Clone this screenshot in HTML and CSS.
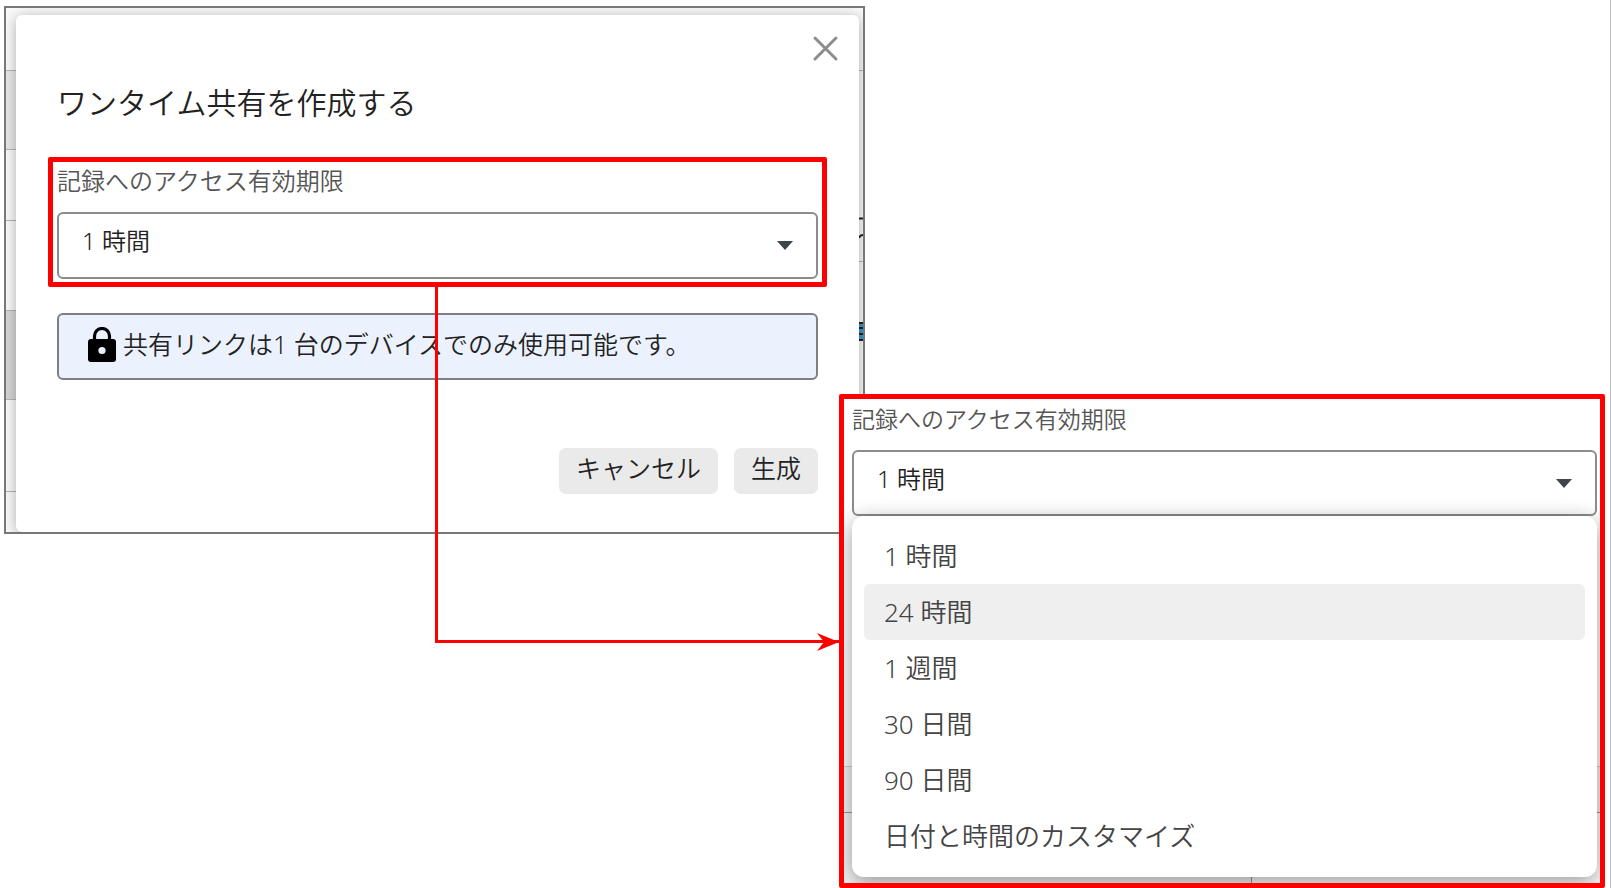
FILE: index.html
```html
<!DOCTYPE html>
<html lang="ja">
<head>
    <meta charset="UTF-8">
    <meta name="viewport" content="width=device-width, initial-scale=1.0">
    <title>ワンタイム共有を作成する</title>
    <link rel="stylesheet" href="styles.css">
</head>
<body>
    <main class="guide">
        <!-- Share dialog -->
        <section class="window">
            <div class="page-behind">
                <div class="side-rows">
                    <div class="row-top"></div>
                    <div class="row-shaded"></div>
                    <div class="row-plain"></div>
                    <div class="row-list"></div>
                    <div class="row-dark"></div>
                    <div class="row-plain-tall"></div>
                    <div class="row-last"></div>
                </div>
                <svg class="edge-marks" viewBox="0 0 4 524" width="4" height="524" aria-hidden="true">
                    <path d="M0 62.5h4M0 253.5h4" stroke="#b5b5b5"/>
                    <path d="M0 210.5h4M0 230q1-3 4-3" stroke="#222" stroke-width="2" fill="none"/>
                    <path d="M0 314h4v19H0z" fill="#2e9bd6"/>
                    <path d="M0 315h4M0 320h4M0 326h4M0 332h4" stroke="#222" stroke-width="2"/>
                </svg>
            </div>

            <div class="dialog">
                <button type="button" class="close" aria-label="閉じる">
                    <svg viewBox="0 0 32 32" width="32" height="32">
                        <path d="M5 5L26 26M26 5L5 26" fill="none" stroke="#8c8c8c" stroke-width="3" stroke-linecap="round"/>
                    </svg>
                </button>
                <h1>ワンタイム共有を作成する</h1>

                <div class="highlight">
                    <label for="expiry">記録へのアクセス有効期限</label>
                    <div class="select-box">
                        <select id="expiry">
                            <option>1 時間</option>
                            <option>24 時間</option>
                            <option>1 週間</option>
                            <option>30 日間</option>
                            <option>90 日間</option>
                            <option>日付と時間のカスタマイズ</option>
                        </select>
                        <svg class="caret" viewBox="0 0 16 9" width="16" height="9" aria-hidden="true">
                            <path d="M0 0h16L8 9z" fill="#3c4648"/>
                        </svg>
                    </div>
                </div>

                <div class="notice">
                    <svg class="lock" viewBox="0 0 28 35" width="28" height="35" aria-hidden="true">
                        <path d="M6.500 14V9a7.500 7.500 0 0 1 15 0v5" fill="none" stroke="#000" stroke-width="3.200"/>
                        <rect x="0" y="12" width="28" height="23" rx="3"/>
                        <circle cx="14" cy="23.500" r="3.600" fill="#ebf2fe"/>
                    </svg>
                    <span>共有リンクは1 台のデバイスでのみ使用可能です。</span>
                </div>

                <div class="actions">
                    <button type="button">キャンセル</button>
                    <button type="button">生成</button>
                </div>
            </div>
        </section>

        <!-- Arrow from the field to its open state -->
        <div class="connector">
            <svg viewBox="0 0 22 18" width="22" height="18" aria-hidden="true">
                <path d="M0 0L22 9L0 18L7 9z" fill="#f00"/>
            </svg>
        </div>

        <!-- Open drop-down -->
        <section class="dropdown">
            <div class="dropdown-behind">
                <div class="behind-card"></div>
                <div class="behind-row"></div>
                <div class="behind-columns"></div>
            </div>
            <div class="dropdown-content">
                <label for="expiry-open">記録へのアクセス有効期限</label>
                <div class="select-box">
                    <select id="expiry-open">
                        <option>1 時間</option>
                        <option>24 時間</option>
                    </select>
                    <svg class="caret" viewBox="0 0 16 9" width="16" height="9" aria-hidden="true">
                        <path d="M0 0h16L8 9z" fill="#3c4648"/>
                    </svg>
                </div>
                <ul class="menu">
                    <li><button type="button">1 時間</button></li>
                    <li><button type="button" class="active">24 時間</button></li>
                    <li><button type="button">1 週間</button></li>
                    <li><button type="button">30 日間</button></li>
                    <li><button type="button">90 日間</button></li>
                    <li><button type="button">日付と時間のカスタマイズ</button></li>
                </ul>
            </div>
        </section>
    </main>
</body>
</html>
```

FILE: styles.css
```css
/* General Styles */
* {
    box-sizing: border-box;
}

body {
    font-family: "Noto Sans", "Noto Sans CJK JP", sans-serif;
    font-weight: 350;
    margin: 0;
    background-color: #fff;
    color: #222;
}

button, select {
    font: inherit;
    color: inherit;
    border: none;
    cursor: pointer;
}

.guide {
    display: grid;
    grid-template-columns: 835fr 26px 740fr;
    align-items: start;
    min-height: 100vh;
    padding: 6px 5px 0 4px;
    border-right: 1px solid #bbb;
}

/* Dialog window */
.window {
    grid-column: 1 / 3;
    grid-row: 1;
    display: grid;
    border: 2px solid #777;
    overflow: hidden;
}

.page-behind, .dialog {
    grid-area: 1 / 1;
}

.page-behind {
    display: flex;
    justify-content: space-between;
    background-color: #f9f9f9;
}

.side-rows {
    width: 50%;
}

.side-rows div {
    border-bottom: 1px solid #b5b5b5;
}

.row-top {
    height: 63px;
}

.row-shaded {
    height: 79px;
    background-color: #e8e8e8;
}

.row-plain {
    height: 71px;
}

.row-list {
    height: 90px;
}

.row-dark {
    height: 89px;
    background-color: #d6d6d6;
}

.row-plain-tall {
    height: 92px;
}

.side-rows .row-last {
    height: 40px;
    border-bottom: none;
}

.dialog {
    display: flex;
    flex-direction: column;
    margin: 7px 4px 0 10px;
    padding: 18px 0 38px;
    background-color: #fff;
    border-radius: 6px;
    box-shadow: 0 2px 14px rgba(0, 0, 0, 0.3);
}

.close {
    align-self: flex-end;
    width: 32px;
    height: 32px;
    margin-right: 17px;
    padding: 0;
    background: none;
}

.close svg {
    display: block;
}

h1 {
    margin: 16px 41px 32px;
    font-size: 30px;
    font-weight: 350;
    line-height: 44px;
}

label {
    display: block;
    margin-bottom: 16px;
    font-size: 24px;
    line-height: 30px;
    color: #555;
}

.highlight {
    margin: 0 32px 26px;
    padding: 4px 4px 3px;
    border: 5px solid #f00;
    border-radius: 2px;
}

.select-box {
    display: grid;
    align-items: center;
}

.select-box select {
    grid-area: 1 / 1;
    appearance: none;
    width: 100%;
    height: 67px;
    padding: 0 40px 10px 23px;
    font-size: 24px;
    background-color: #fff;
    border: 2px solid #8a8c8e;
    border-radius: 6px;
}

.caret {
    grid-area: 1 / 1;
    justify-self: end;
    margin-right: 25px;
    pointer-events: none;
}

.notice {
    display: flex;
    gap: 7px;
    height: 67px;
    margin: 0 41px 68px;
    padding: 12px 29px;
    font-size: 25px;
    line-height: 34px;
    background-color: #ebf2fe;
    border: 2px solid #7c7f84;
    border-radius: 6px;
}

.lock {
    flex: none;
}

.actions {
    display: flex;
    justify-content: flex-end;
    gap: 16px;
    margin: 0 41px;
}

.actions button {
    height: 46px;
    padding: 0 17px 6px;
    font-size: 25px;
    line-height: 40px;
    background-color: #eaeaea;
    border-radius: 7px;
}

/* Connector arrow */
.connector {
    grid-column: 1;
    grid-row: 1;
    z-index: 1;
    display: flex;
    justify-content: flex-end;
    align-items: flex-end;
    height: 356px;
    margin: 281px 0 0 431px;
    border-left: 3px solid #f00;
    border-bottom: 3px solid #f00;
    pointer-events: none;
}

.connector svg {
    margin-bottom: -11px;
}

/* Open drop-down */
.dropdown {
    grid-column: 2 / 4;
    grid-row: 1;
    z-index: 1;
    display: grid;
    margin-top: 388px;
    background-color: #fff;
    border: 5px solid #f00;
    border-radius: 2px;
    overflow: hidden;
}

.dropdown-behind, .dropdown-content {
    grid-area: 1 / 1;
}

.dropdown-behind {
    display: flex;
    flex-direction: column;
}

.behind-card {
    height: 368px;
    border-bottom: 1px solid #ccc;
}

.behind-row {
    height: 46px;
    background-color: #f5f5f5;
    border-bottom: 1px solid #999;
}

.behind-columns {
    flex: 1;
    width: 54%;
    background-color: #f5f5f5;
    border-right: 1px solid #999;
}

.dropdown-content {
    padding: 5px 3px 6px 8px;
}

.dropdown label {
    font-size: 23px;
}

.dropdown .select-box select {
    height: 66px;
}

.menu {
    position: relative;
    margin: 0;
    padding: 12px 12px 13px;
    list-style: none;
    background-color: #fff;
    border-radius: 12px;
    box-shadow: 0 6px 22px rgba(0, 0, 0, 0.4);
}

.menu button {
    display: block;
    width: 100%;
    height: 56px;
    padding: 0 20px 2px;
    font-size: 26px;
    text-align: left;
    color: #444;
    background-color: #fff;
    border-radius: 6px;
}

.menu button:hover, .menu .active {
    background-color: #efefef;
}
```
